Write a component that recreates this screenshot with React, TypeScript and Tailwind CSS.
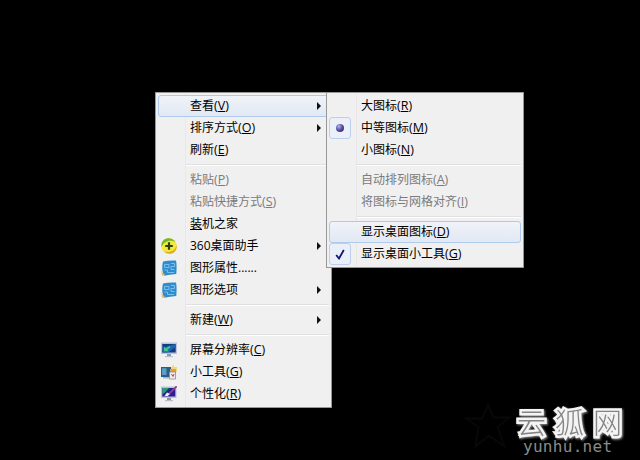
import { ReactNode } from "react";
import clsx from "clsx";

interface Item {
  label?: string;
  hotkey?: string;
  icon?: ReactNode;
  checked?: "radio" | "check";
  arrow?: boolean;
  disabled?: boolean;
  active?: boolean;
  underlineFirst?: boolean;
}

const PlusIcon = () => (
  <svg width="16" height="16" viewBox="0 0 16 16">
    <circle cx="8" cy="8" r="7.8" fill="#f4e83c" />
    <path d="M0.400 9C-.2 4 3 .4 7 .2c3-.2 6 1.400 7.500 4C12 2.700 9 2.500 6.500 3.300 3.500 4.300 1.500 6.500.4 9z" fill="#72b52c" />
    <path d="M15.600 7c.8 5-2.400 8.600-6.400 8.800-2 .1-4.500-.6-6-2.200 3 .8 6 .4 8.500-.9 2-1.200 3.300-3.200 3.900-5.700z" fill="#d9b01c" />
    <path d="M8 4.200v7.600M4.200 8h7.600" stroke="#2b400c" strokeWidth="2.200" />
  </svg>
);

const GraphicsIcon = () => (
  <svg width="16" height="16" viewBox="0 0 16 16">
    <path d="M2 1.500Q8 0 15 .5 16 5 15.300 14 9 14.500 3 15.800 0 9 2 1.500z" fill="#2f8ccd" />
    <path d="M0.300 9.500q1 5 5.700 6H1z" fill="#dfb668" />
    <path
      d="M3.500 4.500h4.500v3h-4.500zM10 3.500h3.500v3H10v3h3.500M3.500 10h3v2.500h6.500"
      fill="none"
      stroke="#79bfe9"
      strokeWidth="1"
    />
  </svg>
);

const ScreenIcon = () => (
  <svg width="16" height="16" viewBox="0 0 16 16">
    <path d="M0 .5h16V12H0z" fill="#bcc3dc" />
    <path d="M1.300 2h13.400v8.500H1.300z" fill="#173a86" />
    <path d="M1.300 5.500L14.700 2v3L7 10.500H1.300z" fill="#1b69a8" />
    <path d="M3 9.300V4.500l1.700 1.700L8.500 4l1 1.500L6.300 7.800 8 9.300z" fill="#3fc690" />
    <path d="M6 12h4v2H6z" fill="#9299a8" />
    <path d="M4 14h8v1.200H4z" fill="#bec2cb" />
  </svg>
);

const GadgetIcon = () => (
  <svg width="16" height="16" viewBox="0 0 16 16">
    <path d="M9 4l1-1.500 1 .5 1-3 1.300 3L16 3v5H9z" fill="#f5d876" />
    <path d="M0 3h10v10H0z" fill="#2c5d86" />
    <path d="M1 4.200h4.500V11H1z" fill="#5b9fc8" />
    <path d="M9 5h6v4H9z" fill="#e0a043" />
    <path d="M8.500 8h6v7h-6z" fill="#f5eded" stroke="#8d8893" strokeWidth=".8" />
    <path d="M10.500 10l1.500 2.500 1-2.500" fill="none" stroke="#b84444" />
    <path d="M2 13h6v1.500H2z" fill="#a9b5c2" />
  </svg>
);

const PersonalizeIcon = () => (
  <svg width="16" height="16" viewBox="0 0 16 16">
    <path d="M0 .5h15.500V12H0z" fill="#bcc0d8" />
    <path d="M1.300 2h13v8.500h-13z" fill="#2a1f90" />
    <path d="M1.300 2H8L3 7.500H1.300z" fill="#27a077" />
    <path d="M15.700.3L8 7.800" stroke="#94408c" strokeWidth="1.800" />
    <path d="M3.500 9.800L6 6.500l3 1.500-2.500 2.200z" fill="#eceefa" />
    <path d="M6 12h4v2H6z" fill="#8d92a5" />
    <path d="M4 14h8v1.200H4z" fill="#b8bdc7" />
  </svg>
);

const mainMenu: (Item | null)[] = [
  { label: "查看", hotkey: "V", arrow: true, active: true },
  { label: "排序方式", hotkey: "O", arrow: true },
  { label: "刷新", hotkey: "E" },
  null,
  { label: "粘贴", hotkey: "P", disabled: true },
  { label: "粘贴快捷方式", hotkey: "S", disabled: true },
  { label: "装机之家", underlineFirst: true },
  { label: "360桌面助手", icon: <PlusIcon />, arrow: true },
  { label: "图形属性......", icon: <GraphicsIcon /> },
  { label: "图形选项", icon: <GraphicsIcon />, arrow: true },
  null,
  { label: "新建", hotkey: "W", arrow: true },
  null,
  { label: "屏幕分辨率", hotkey: "C", icon: <ScreenIcon /> },
  { label: "小工具", hotkey: "G", icon: <GadgetIcon /> },
  { label: "个性化", hotkey: "R", icon: <PersonalizeIcon /> },
];

const viewMenu: (Item | null)[] = [
  { label: "大图标", hotkey: "R" },
  { label: "中等图标", hotkey: "M", checked: "radio" },
  { label: "小图标", hotkey: "N" },
  null,
  { label: "自动排列图标", hotkey: "A", disabled: true },
  { label: "将图标与网格对齐", hotkey: "I", disabled: true },
  null,
  { label: "显示桌面图标", hotkey: "D", active: true },
  { label: "显示桌面小工具", hotkey: "G", checked: "check" },
];

function CheckMark({ type }: { type: "radio" | "check" }) {
  return (
    <span className="flex size-[22px] items-center justify-center rounded-[3px] border border-[#bccfec] bg-[#ebf0f8]">
      {type === "radio" ? (
        <span className="size-2 rounded-full bg-radial-[at_35%_30%] from-[#b5b4e6] via-[#504d9b] to-[#1f1c5c]" />
      ) : (
        <svg width="10" height="11" viewBox="0 0 10 11">
          <path d="M1.200 6L4 9.500 8.800 1" fill="none" stroke="#12127a" strokeWidth="1.800" />
        </svg>
      )}
    </span>
  );
}

function MenuItem({ item }: { item: Item }) {
  const { label = "", hotkey, icon, checked, arrow, disabled, active, underlineFirst } = item;

  return (
    <li
      className={clsx(
        "flex h-[22px] items-center rounded-[3px] border",
        active
          ? "border-[#aecbee] bg-linear-to-b from-[#f0f3f8] to-[#e1e9f4]"
          : "border-transparent",
        disabled ? "text-[#7b7b7b]" : "text-black"
      )}>
      <span className="-ml-px flex w-[32px] shrink-0 items-center">
        {icon && <span className="ml-[3px]">{icon}</span>}
        {checked && <CheckMark type={checked} />}
      </span>
      <span className="flex-1 whitespace-nowrap leading-5">
        {underlineFirst ? (
          <>
            <u className="underline-offset-1">{label[0]}</u>
            {label.slice(1)}
          </>
        ) : (
          label
        )}
        {hotkey && (
          <span className="text-[12.5px]">
            (<u className="decoration-1 underline-offset-1">{hotkey}</u>)
          </span>
        )}
      </span>
      {arrow && (
        <svg className="mr-[7px]" width="4" height="8" viewBox="0 0 4 8">
          <path d="M0 0l4 4-4 4z" fill="#111" />
        </svg>
      )}
    </li>
  );
}

function Menu({ items, className }: { items: (Item | null)[]; className: string }) {
  return (
    <ul
      className={clsx(
        "absolute border border-[#979797] bg-[#f0f0f0] bg-linear-to-r from-transparent from-[29px] via-[#e0e0e0] via-[29px] to-[#f0f0f0] to-[30px] p-[2px]",
        className
      )}>
      {items.map((item, i) =>
        item ? (
          <MenuItem key={i} item={item} />
        ) : (
          <li key={i} className="flex h-2 items-center pl-7">
            <hr className="h-[2px] w-full border-t border-b border-t-[#e0e0e0] border-b-white" />
          </li>
        )
      )}
    </ul>
  );
}

export default function App() {
  return (
    <main className="relative h-[460px] w-[640px] overflow-hidden bg-black font-['Open_Sans','Noto_Sans_CJK_SC',sans-serif] text-[12px]">
      <Menu items={mainMenu} className="top-[92px] left-[155px] w-[177px]" />
      <Menu items={viewMenu} className="top-[92px] left-[326px] w-[198px]" />

      {/* watermark */}
      <svg
        className="absolute top-[402px] left-[464px]"
        width="48"
        height="54"
        viewBox="0 0 50 56"
        fill="none"
        stroke="#080808"
        strokeWidth="2">
        <path d="M25 3l6 13h16L35 26l7 20-16-11-14 11 3-20L2 17h17z" />
      </svg>
      <div className="absolute top-[406px] left-[517px] flex flex-col whitespace-nowrap">
        <div className="font-['Noto_Sans_CJK_SC',sans-serif] text-[29px] leading-[30px] font-light tracking-[9px] text-[#858585] [-webkit-text-stroke:5px_#f4f4f4] [paint-order:stroke_fill] [stroke-linejoin:round] drop-shadow-[1px_1px_1px_#999]">
          云狐网
        </div>
        <div className="relative mt-[3px] ml-[6px] font-['DejaVu_Sans_Mono',monospace] text-[16px] leading-[16px] tracking-[0.3px] text-[#8a8a8a]">
          yunhu.net
        </div>
      </div>
    </main>
  );
}
